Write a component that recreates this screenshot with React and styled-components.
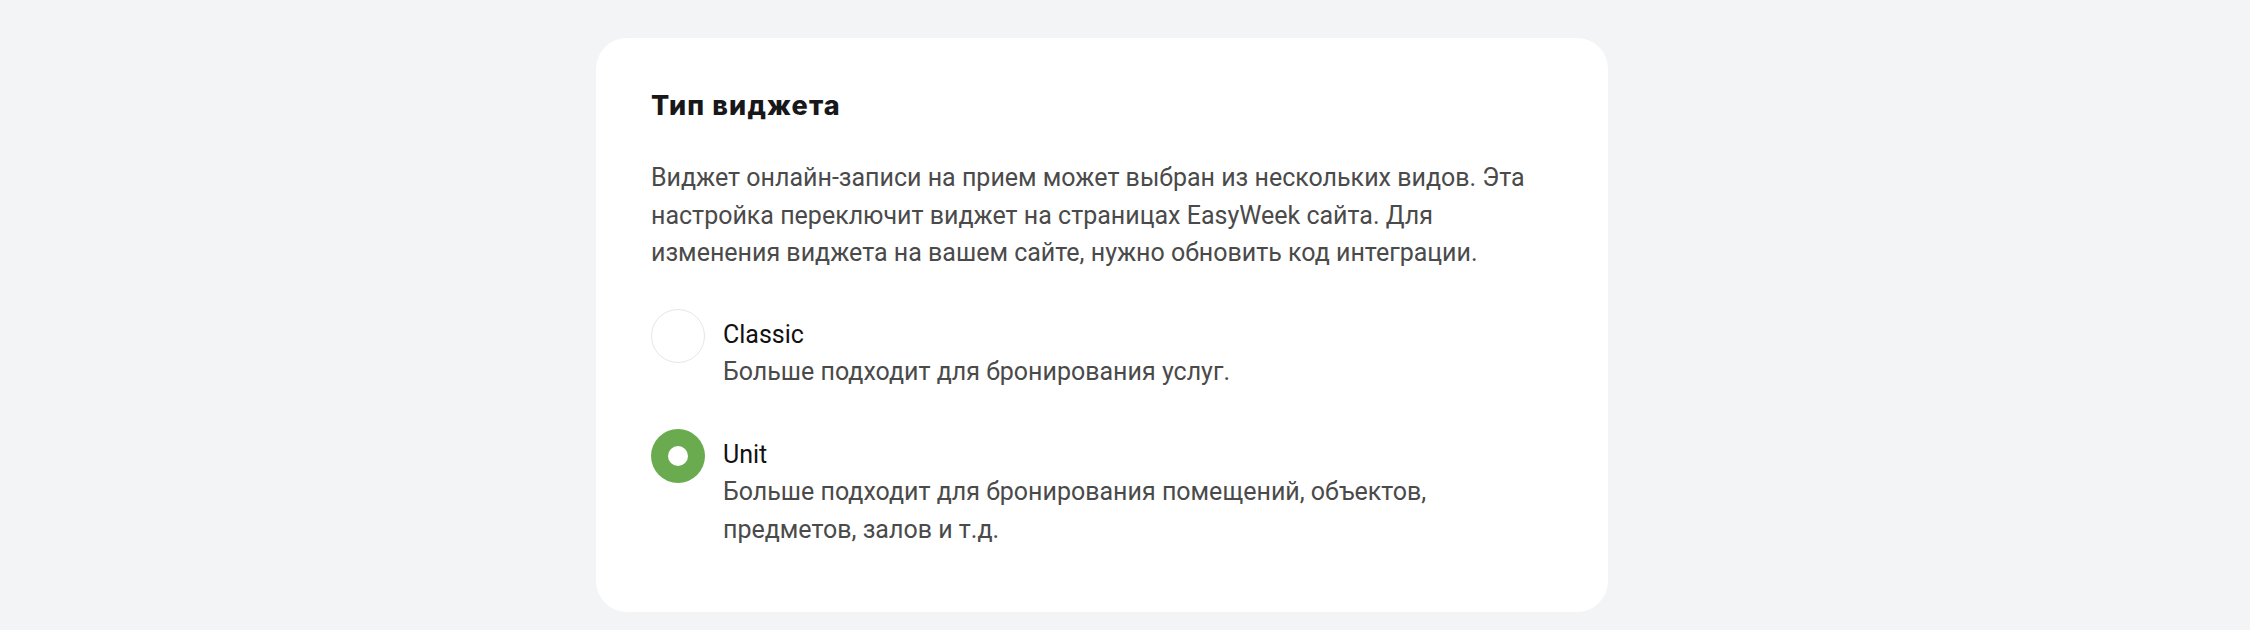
import React, { useState } from "react";
import styled, { createGlobalStyle } from "styled-components";

const Global = createGlobalStyle`
  html, body { margin: 0; padding: 0; background: #f3f4f6; }
  body { font-family: Roboto, "Noto Sans", sans-serif; }
  * { box-sizing: border-box; }
`;

const Page = styled.main`
  min-height: 630px;
  padding: 38px 0 20px 596px;
  background: #f3f4f6;
`;

const Card = styled.section`
  width: 1012px;
  background: #ffffff;
  border-radius: 31px;
  padding: 51px 55px 64px 55px;
`;

const Title = styled.h2`
  margin: 0;
  font-family: Inter, Roboto, sans-serif;
  font-weight: 800;
  font-size: 27px;
  line-height: 34px;
  color: #18181b;
  letter-spacing: 1.15px;
`;

const Description = styled.p`
  margin: 36px 0 0 0;
  font-size: 25px;
  line-height: 37.5px;
  color: #4a4a4a;
  max-width: 890px;
`;

const Options = styled.div`
  margin-top: 37px;
  display: flex;
  flex-direction: column;
  gap: 38px;
`;

const Option = styled.label`
  display: flex;
  align-items: flex-start;
  gap: 18px;
  cursor: pointer;
`;

const Radio = styled.span`
  flex: 0 0 54px;
  width: 54px;
  height: 54px;
  border-radius: 50%;
  display: flex;
  align-items: center;
  justify-content: center;
  background: ${(p) => (p.$checked ? "#6aab50" : "#ffffff")};
  border: ${(p) => (p.$checked ? "none" : "1.5px solid #e6e6e6")};
  &::after {
    content: "";
    display: ${(p) => (p.$checked ? "block" : "none")};
    width: 20px;
    height: 20px;
    border-radius: 50%;
    background: #ffffff;
  }
`;

const OptionText = styled.div`
  padding-top: 7px;
  display: flex;
  flex-direction: column;
  font-size: 25px;
  line-height: 37.5px;
`;

const OptionLabel = styled.span`
  color: #111111;
`;

const OptionHint = styled.span`
  color: #4a4a4a;
  max-width: 720px;
`;

const options = [
  { id: "classic", label: "Classic", hint: "Больше подходит для бронирования услуг." },
  { id: "unit", label: "Unit", hint: "Больше подходит для бронирования помещений, объектов, предметов, залов и т.д." },
];

export default function App() {
  const [value, setValue] = useState("unit");
  return (
    <>
      <Global />
      <Page>
        <Card>
          <Title>Тип виджета</Title>
          <Description>
            Виджет онлайн-записи на прием может выбран из нескольких видов. Эта настройка переключит виджет на страницах EasyWeek сайта. Для изменения виджета на вашем сайте, нужно обновить код интеграции.
          </Description>
          <Options>
            {options.map((o) => (
              <Option key={o.id} onClick={() => setValue(o.id)}>
                <Radio $checked={value === o.id} />
                <OptionText>
                  <OptionLabel>{o.label}</OptionLabel>
                  <OptionHint>{o.hint}</OptionHint>
                </OptionText>
              </Option>
            ))}
          </Options>
        </Card>
      </Page>
    </>
  );
}
